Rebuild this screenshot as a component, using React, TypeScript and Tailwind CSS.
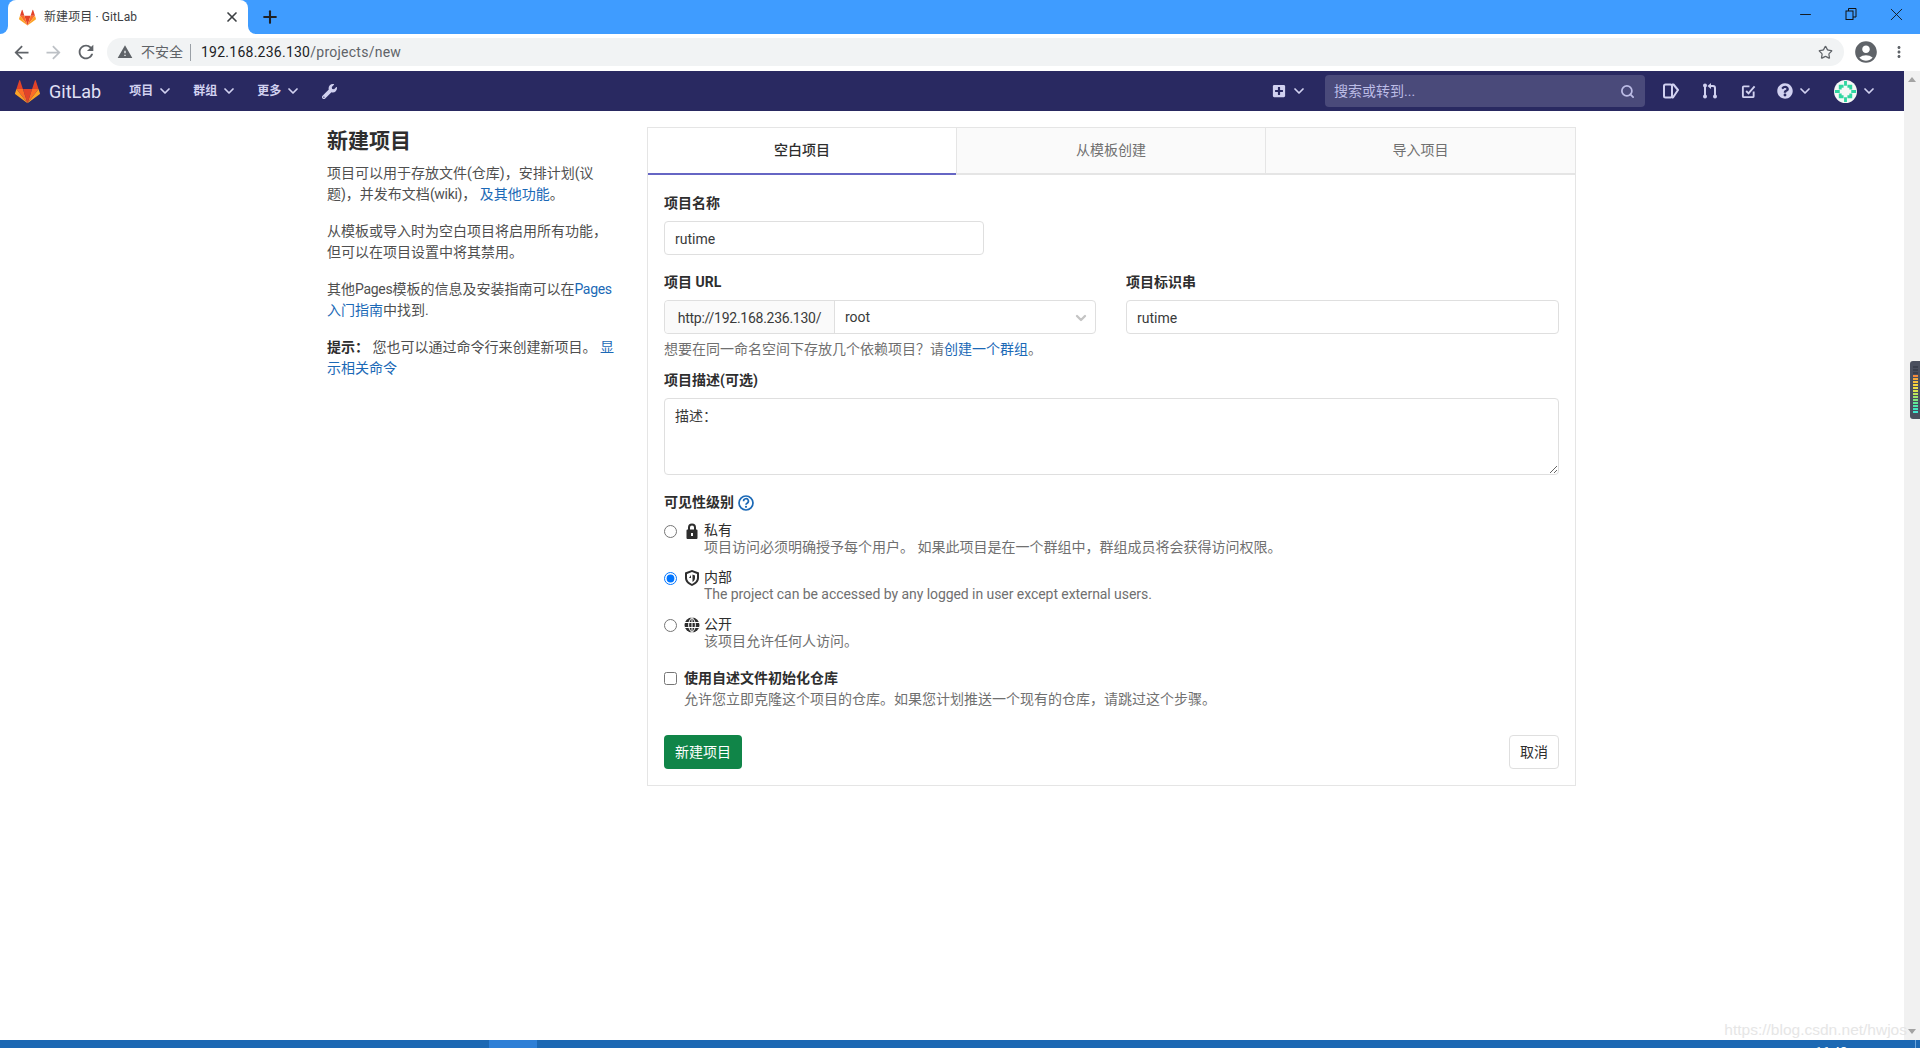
import { ChevronDown, Minus, Plus, Search, Star, X } from "lucide-react";
import { FaPlusSquare, FaQuestionCircle, FaWrench } from "react-icons/fa";
import { MdAccountCircle, MdArrowBack, MdArrowForward, MdMoreVert, MdRefresh, MdWarning } from "react-icons/md";
import type { ReactNode } from "react";

const fontStack = "font-['Roboto','Noto_Sans_CJK_SC',sans-serif]";

function Tanuki({ className }: { className: string }) {
  return (
    <svg viewBox="0 0 36 36" className={className}>
      <path fill="#e24329" d="M18 34.74l6.63-20.4H11.38z" />
      <path fill="#fc6d26" d="M18 34.74l-6.63-20.4H2.08z" />
      <path fill="#fca326" d="M2.08 14.34L.07 20.53a1.37 1.37 0 0 0 .5 1.53L18 34.74z" />
      <path fill="#e24329" d="M2.08 14.34h9.3l-4-12.3a.68.68 0 0 0-1.3 0z" />
      <path fill="#fc6d26" d="M18 34.74l6.63-20.4h9.29z" />
      <path fill="#fca326" d="M33.92 14.34l2 6.19a1.37 1.37 0 0 1-.5 1.53L18 34.74z" />
      <path fill="#e24329" d="M33.92 14.34h-9.29l4-12.3a.68.68 0 0 1 1.3 0z" />
    </svg>
  );
}

function RestoreIcon() {
  return (
    <svg viewBox="0 0 12 12" className="h-[12px] w-[12px]" fill="none" stroke="#111" strokeWidth="1">
      <rect x="1" y="3" width="7" height="8.500" />
      <path d="M3.500 3V.5h7.500v8.500H8" />
    </svg>
  );
}

function TabStrip() {
  return (
    <div className="flex h-[34px] shrink-0 items-stretch bg-[#3f9cff]">
      <div className="relative ml-2 flex h-[34px] w-[240px] items-center rounded-t-lg bg-white pl-[11px]">
        <div className="absolute bottom-0 left-[-8px] h-[8px] w-[8px] bg-white">
          <div className="h-full w-full rounded-br-lg bg-[#3f9cff]" />
        </div>
        <div className="absolute bottom-0 right-[-8px] h-[8px] w-[8px] bg-white">
          <div className="h-full w-full rounded-bl-lg bg-[#3f9cff]" />
        </div>
        <Tanuki className="h-[17px] w-[17px]" />
        <span className="ml-2 text-[12px] tracking-[0.1px] text-[#3c4043]">新建项目 · GitLab</span>
        <X className="ml-auto mr-[8px] h-[16px] w-[16px] text-[#3c4043]" strokeWidth={2.5} />
      </div>
      <div className="ml-[12px] flex items-center">
        <Plus className="h-[20px] w-[20px] text-[#202124]" strokeWidth={2.5} />
      </div>
      <div className="ml-auto flex items-center pb-[6px]">
        <Minus className="mr-[31px] h-[17px] w-[17px] text-[#111]" strokeWidth={1.3} />
        <RestoreIcon />
        <X className="ml-[29px] mr-[13px] h-[21px] w-[21px] text-[#111]" strokeWidth={1} />
      </div>
    </div>
  );
}

function Toolbar() {
  return (
    <div className="flex h-[37px] shrink-0 items-center bg-white pb-[4px] pt-[3px]">
      <MdArrowBack className="ml-[11px] h-[21px] w-[21px] text-[#5f6368]" />
      <MdArrowForward className="ml-[11px] h-[21px] w-[21px] text-[#bdc1c6]" />
      <MdRefresh className="ml-[11px] h-[22px] w-[22px] text-[#5f6368]" />
      <div className="ml-[10px] flex h-[28px] w-[1737px] items-center rounded-full bg-[#f1f3f4] pl-[10px] text-[14px]">
        <MdWarning className="h-[16px] w-[16px] text-[#5f6368]" />
        <span className="ml-[8px] text-[#5f6368]">不安全</span>
        <span className="ml-[7px] h-[17px] w-px bg-[#9aa0a6]" />
        <span className="ml-[10px] tracking-[0.25px] text-[#202124]">192.168.236.130</span>
        <span className="tracking-[0.25px] text-[#5f6368]">/projects/new</span>
        <Star className="ml-auto mr-[11px] h-[15px] w-[15px] text-[#5f6368]" strokeWidth={2} />
      </div>
      <MdAccountCircle className="ml-[9px] h-[26px] w-[26px] text-[#5f6368]" />
      <MdMoreVert className="ml-[11px] h-[18px] w-[18px] text-[#5f6368]" />
    </div>
  );
}

function Chevron({ className = "" }: { className?: string }) {
  return <ChevronDown className={"h-[16px] w-[16px] text-[#d1d1f0] " + className} strokeWidth={2.6} />;
}

function NavMenu({ label }: { label: string }) {
  return (
    <div className="mr-[20px] flex items-center text-[12px] font-bold text-[#d1d1f0]">
      <span>{label}</span>
      <Chevron className="ml-[4px]" />
    </div>
  );
}

function IssuesIcon() {
  return (
    <svg viewBox="0 0 16 16" className="h-[16px] w-[16px]" fill="none" stroke="#d1d1f0" strokeWidth="2">
      <rect x="1" y="1.500" width="8" height="13" rx="1.500" />
      <path d="M9 1.500h1.500L15 7l-5 7.500H9" strokeLinejoin="round" />
    </svg>
  );
}

function MergeIcon() {
  return (
    <svg viewBox="0 0 16 16" className="h-[16px] w-[16px]" fill="#d1d1f0">
      <circle cx="3" cy="2.500" r="2" />
      <circle cx="3" cy="13.500" r="2" />
      <rect x="2" y="2.500" width="2" height="11" />
      <circle cx="13" cy="13.500" r="2" />
      <path d="M9 0v6L5.500 3zM8.500 2h2.500a3 3 0 0 1 3 3v8h-2V5a1 1 0 0 0-1-1H8.500z" />
    </svg>
  );
}

function TodoIcon() {
  return (
    <svg viewBox="0 0 16 16" className="h-[15px] w-[15px]" fill="none" stroke="#d1d1f0" strokeWidth="2">
      <path d="M9 2.500H3a1 1 0 0 0-1 1V13a1 1 0 0 0 1 1h9.500a1 1 0 0 0 1-1V8" />
      <path d="M5.500 7.500l2.500 2.500 6.500-7.500" />
    </svg>
  );
}

function Avatar() {
  return (
    <svg viewBox="0 0 24 24" className="h-[23px] w-[23px] rounded-full bg-[#f5f8f6]">
      <g fill="#2fd6a0">
        <path d="M5 5h5v3H8v2H5zM19 5h-5v3h2v2h3zM5 19h5v-3H8v-2H5zM19 19h-5v-3h2v-2h3z" />
        <path d="M10.500 1h3v5h-3zM10.500 18h3v5h-3zM1 10.500h5v3H1zM18 10.500h5v3h-5z" />
      </g>
    </svg>
  );
}

function NavBar() {
  return (
    <div className="flex h-[40px] shrink-0 items-center bg-[#292961]">
      <Tanuki className="ml-[15px] h-[25px] w-[25px]" />
      <span className="ml-[9px] mr-[28px] text-[18px] text-[#e0e0f5]">GitLab</span>
      <NavMenu label="项目" />
      <NavMenu label="群组" />
      <NavMenu label="更多" />
      <FaWrench className="ml-[1px] h-[15px] w-[15px] text-[#d1d1f0]" />

      <FaPlusSquare className="ml-auto h-[14px] w-[14px] text-[#d1d1f0]" />
      <Chevron className="ml-[5px]" />
      <div className="ml-[18px] flex h-[32px] w-[320px] items-center rounded-[4px] bg-[#4a4a7a] pl-[9px] pr-[10px] text-[14px] text-[#bcbce6]">
        <span className="pt-[1px]">搜索或转到...</span>
        <Search className="ml-auto h-[15px] w-[15px]" strokeWidth={2.8} />
      </div>
      <div className="ml-[18px]"><IssuesIcon /></div>
      <div className="ml-[23px]"><MergeIcon /></div>
      <div className="ml-[23px]"><TodoIcon /></div>
      <FaQuestionCircle className="ml-[21px] h-[16px] w-[16px] text-[#d1d1f0]" />
      <Chevron className="ml-[4px]" />
      <div className="ml-[21px]"><Avatar /></div>
      <Chevron className="ml-[4px] mr-[27px]" />
    </div>
  );
}

function Sidebar() {
  return (
    <div className="w-[290px] shrink-0 pt-[16px] text-[14px] leading-[21px] text-[#4f4f4f]">
      <h3 className="mb-[10px] h-[26px] pt-[1px] text-[21px] font-bold leading-[26px] text-[#2e2e2e]">新建项目</h3>
      <p className="mb-[16px]">
        项目可以用于存放文件(仓库)，安排计划(议
        <br />
        题)，并发布文档<span className="tracking-[-0.3px]">(wiki)</span>， <span className="text-[#1b69b6]">及其他功能</span>。
      </p>
      <p className="mb-[16px]">
        从模板或导入时为空白项目将启用所有功能，
        <br />
        但可以在项目设置中将其禁用。
      </p>
      <p className="mb-[16px]">
        其他<span className="tracking-[-0.3px]">Pages</span>模板的信息及安装指南可以在<span className="tracking-[-0.3px] text-[#1b69b6]">Pages</span>
        <br />
        <span className="text-[#1b69b6]">入门指南</span>中找到.
      </p>
      <p>
        <strong className="font-bold text-[#2e2e2e]">提示：</strong> 您也可以通过命令行来创建新项目。 <span className="text-[#1b69b6]">显</span>
        <br />
        <span className="text-[#1b69b6]">示相关命令</span>
      </p>
    </div>
  );
}

function FieldLabel({ children, className = "" }: { children: ReactNode; className?: string }) {
  return <div className={"h-[21px] text-[14px] font-bold leading-[21px] text-[#2e2e2e] " + className}>{children}</div>;
}

const inputClass =
  "h-[34px] rounded-[4px] border border-[#dfdfdf] bg-white px-[10px] pt-[2px] text-[14px] text-[#3a3a3a] outline-none";

function LockIcon() {
  return (
    <svg viewBox="0 0 16 16" className="h-[16px] w-[16px]" fill="#2e2e2e">
      <path fillRule="evenodd" d="M4 6.500V4.500a4 4 0 0 1 8 0v2h.5a1 1 0 0 1 1 1v7.500a1 1 0 0 1-1 1h-9a1 1 0 0 1-1-1V7.500a1 1 0 0 1 1-1zm2 0h4V4.500a2 2 0 0 0-4 0zM7 10v3h2v-3z" />
    </svg>
  );
}

function ShieldIcon() {
  return (
    <svg viewBox="0 0 16 16" className="h-[16px] w-[16px]" fill="#2e2e2e">
      <path fillRule="evenodd" d="M8 0l7 2.500V8c0 3.500-3 6.500-7 8-4-1.500-7-4.500-7-8V2.500zM3 3.900V8c0 2.500 2.200 4.700 5 5.900 2.800-1.200 5-3.400 5-5.900V3.900L8 2.100z" />
      <path d="M8.500 4.500v7.500c1.500-.9 2.500-2.200 2.500-4V5.500zM7 8H5l2-3z" />
    </svg>
  );
}

function GlobeIcon() {
  return (
    <svg viewBox="0 0 16 16" className="h-[16px] w-[16px]">
      <circle cx="8" cy="8" r="7.500" fill="#2e2e2e" />
      <path d="M8 .5v15M1 5.500h14M1 10.500h14M8 .5c-4.500 4-4.500 11 0 15M8 .5c4.500 4 4.500 11 0 15" fill="none" stroke="#fff" strokeWidth="1" />
    </svg>
  );
}

function VisibilityRow(props: { icon: ReactNode; label: string; desc: string; checked?: boolean; descClass?: string }) {
  return (
    <div className="flex leading-[17px]">
      <input type="radio" name="visibility" readOnly checked={!!props.checked} className="ml-0 mt-[3px] h-[13px] w-[13px] shrink-0" />
      <div className="ml-[7px] w-[16px] shrink-0 pt-[1px]">{props.icon}</div>
      <div className="ml-[4px]">
        <div className="text-[#2e2e2e]">{props.label}</div>
        <div className={"text-[#707070] " + (props.descClass ?? "")}>{props.desc}</div>
      </div>
    </div>
  );
}

function NewProjectCard() {
  return (
    <div className="mt-[16px] ml-[30px] h-[659px] w-[929px] shrink-0 border border-[#e5e5e5] bg-white">
      <div className="grid h-[47px] grid-cols-[308px_309px_310px] text-[14px] leading-[44px]">
        <div className="border-b-2 border-[#6666c4] text-center font-medium text-[#2e2e2e]">空白项目</div>
        <div className="border-b-2 border-l border-[#e5e5e5] bg-[#fafafa] text-center text-[#707070]">从模板创建</div>
        <div className="border-b-2 border-l border-[#e5e5e5] bg-[#fafafa] text-center text-[#707070]">导入项目</div>
      </div>

      <div className="px-[16px] pt-[17px]">
        <FieldLabel className="mb-[8px] pt-[1px]">项目名称</FieldLabel>
        <input readOnly value="rutime" className={inputClass + " block w-[320px]"} />

        <div className="mt-[17px] grid grid-cols-[432px_433px] gap-x-[30px]">
          <div>
            <FieldLabel className="mb-[7px]">项目 URL</FieldLabel>
            <div className="flex h-[34px] rounded-[4px] border border-[#dfdfdf] text-[14px]">
              <div className="flex w-[170px] items-center justify-center rounded-l-[4px] border-r border-[#dfdfdf] bg-[#fafafa] pt-[2px] tracking-[-0.26px] text-[#3a3a3a]">
                http://192.168.236.130/
              </div>
              <div className="flex flex-1 items-center pl-[10px] pr-[6px] text-[#3a3a3a]">
                <span>root</span>
                <ChevronDown className="ml-auto mt-[2px] h-[16px] w-[16px] text-[#c4c4c4]" strokeWidth={3.5} />
              </div>
            </div>
          </div>
          <div>
            <FieldLabel className="mb-[7px]">项目标识串</FieldLabel>
            <input readOnly value="rutime" className={inputClass + " block w-full"} />
          </div>
        </div>

        <div className="mt-[5px] h-[21px] text-[14px] leading-[21px] text-[#707070]">
          想要在同一命名空间下存放几个依赖项目？请<span className="text-[#1b69b6]">创建一个群组</span>。
        </div>

        <FieldLabel className="mb-[7px] mt-[10px]">项目描述(可选)</FieldLabel>
        <textarea
          readOnly
          value="描述："
          className="block h-[77px] w-full rounded-[4px] border border-[#dfdfdf] px-[10px] pb-[6px] pt-[7px] text-[14px] leading-[21px] text-[#3a3a3a] outline-none"
        />

        <FieldLabel className="mt-[17px] flex items-center">
          可见性级别
          <HelpIcon />
        </FieldLabel>

        <div className="mt-[9px] flex flex-col gap-[13px] text-[14px]">
          <VisibilityRow icon={<LockIcon />} label="私有" desc="项目访问必须明确授予每个用户。 如果此项目是在一个群组中，群组成员将会获得访问权限。" />
          <VisibilityRow icon={<ShieldIcon />} label="内部" desc="The project can be accessed by any logged in user except external users." descClass="tracking-[-0.06px]" checked />
          <VisibilityRow icon={<GlobeIcon />} label="公开" desc="该项目允许任何人访问。" />
        </div>

        <div className="mt-[18px] flex text-[14px] leading-[21px]">
          <input type="checkbox" readOnly className="mt-[4px] h-[13px] w-[13px] shrink-0" />
          <div className="ml-[7px]">
            <div className="font-bold text-[#2e2e2e]">使用自述文件初始化仓库</div>
            <div className="text-[#707070]">允许您立即克隆这个项目的仓库。如果您计划推送一个现有的仓库，请跳过这个步骤。</div>
          </div>
        </div>

        <div className="mt-[25px] flex justify-between text-[14px]">
          <button className="h-[34px] w-[78px] rounded-[4px] bg-[#108548] pt-[1px] text-white">新建项目</button>
          <button className="h-[34px] w-[50px] rounded-[4px] border border-[#dfdfdf] bg-white pt-[1px] text-[#2e2e2e]">取消</button>
        </div>
      </div>
    </div>
  );
}

function HelpIcon() {
  return (
    <svg viewBox="0 0 16 16" className="ml-[4px] h-[16px] w-[16px]" fill="none">
      <circle cx="8" cy="8" r="7" stroke="#1b69b6" strokeWidth="1.700" />
      <path d="M5.600 6.200a2.400 2.400 0 1 1 3.500 2c-.7.4-1.100.7-1.100 1.600" stroke="#1b69b6" strokeWidth="1.700" />
      <circle cx="8" cy="11.800" r="1.100" fill="#1b69b6" />
    </svg>
  );
}

function Scrollbar() {
  return (
    <div className="flex w-[16px] shrink-0 flex-col items-center justify-between bg-[#f1f1f1] py-[6px]">
      <div className="h-0 w-0 border-x-[4px] border-b-[5px] border-x-transparent border-b-[#a3a3a3]" />
      <div className="h-0 w-0 border-x-[4px] border-t-[5px] border-x-transparent border-t-[#a3a3a3]" />
    </div>
  );
}

const meterColors = [
  "#3a3f4d", "#3a3f4d", "#3a3f4d", "#f58a3c", "#f5a83c", "#f5c13c", "#f5d53c", "#ecdf45", "#d9e54d",
  "#bde65a", "#9fe86b", "#7fe97f", "#62ea95", "#4eeaa9", "#44e9bd", "#40e6cf",
];

function SideMeter() {
  return (
    <div className="absolute right-0 top-[290px] flex h-[58px] w-[10px] flex-col items-center gap-[1px] rounded-l-[3px] bg-[#4a4f5e] pl-[1px] pt-[5px]">
      {meterColors.map((c, i) => (
        <div key={i} className="h-[2px] w-[5px]" style={{ backgroundColor: c }} />
      ))}
    </div>
  );
}

export default function App() {
  return (
    <div className={"flex h-[1048px] w-[1920px] flex-col overflow-hidden bg-white " + fontStack}>
      <TabStrip />
      <Toolbar />
      <div className="relative flex min-h-0 flex-1">
        <div className="min-w-0 flex-1">
          <NavBar />
          <div className="mx-auto flex w-[1280px] px-[15px]">
            <Sidebar />
            <NewProjectCard />
          </div>
        </div>
        <Scrollbar />
        <SideMeter />
        <div className="absolute bottom-0 right-[13px] font-['Liberation_Sans',sans-serif] text-[15.5px] leading-[20px] text-[#e6e6e6]">
          https://blog.csdn.net/hwjos
        </div>
      </div>
      <div className="relative flex h-[8px] shrink-0 overflow-hidden bg-[#1c68b3]">
        <div className="ml-[489px] h-full w-[48px] bg-[#2e7fd6]" />
        <div className="ml-[1278px] pt-[5px] text-[13px] leading-[14px] text-white">16:48</div>
        <div className="ml-auto mr-[4px] h-full w-px bg-[#6ea6dc]" />
      </div>
    </div>
  );
}
